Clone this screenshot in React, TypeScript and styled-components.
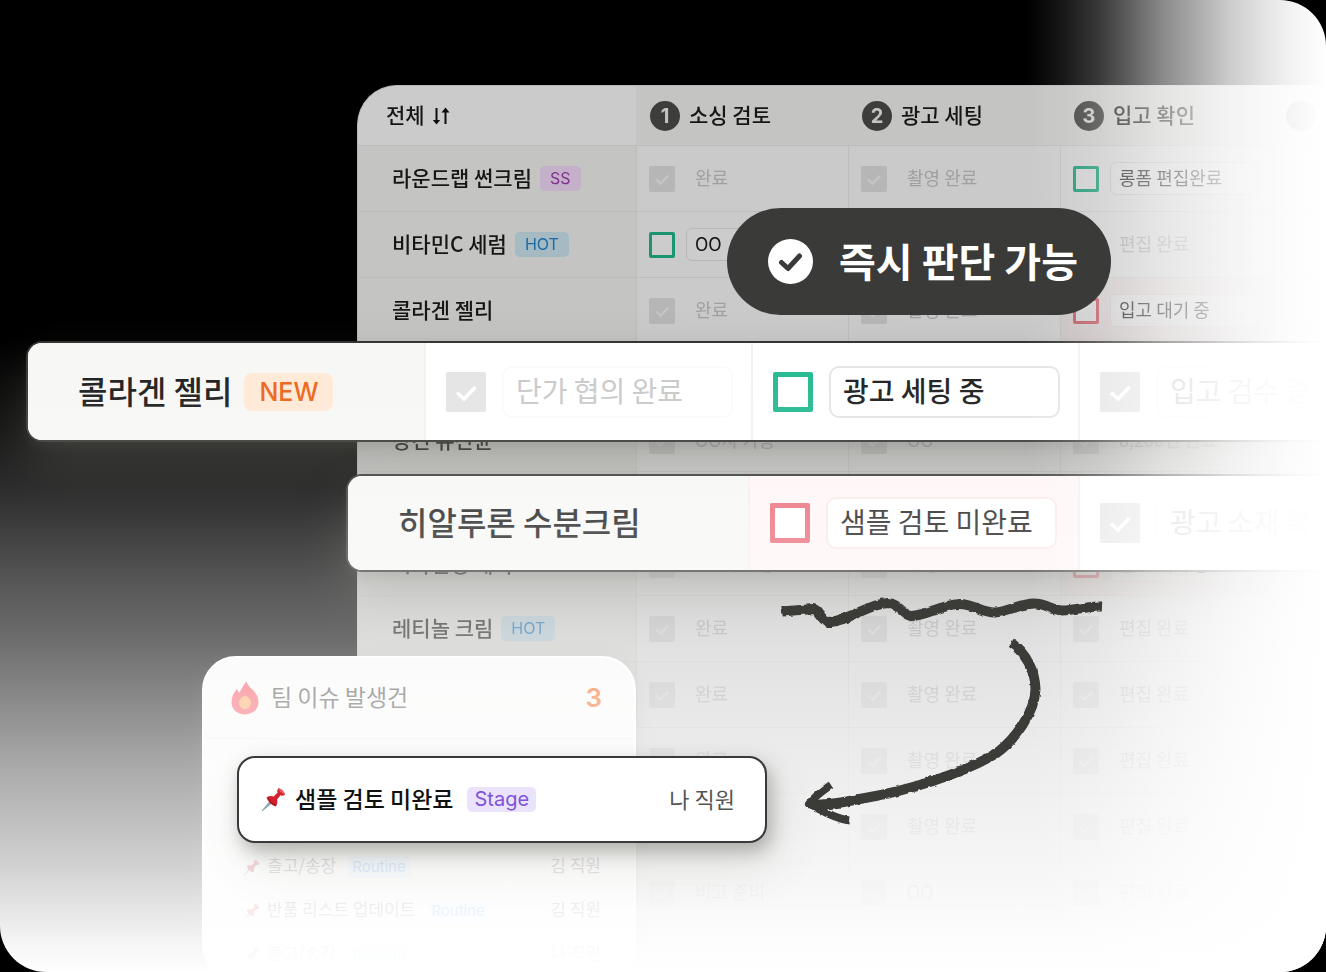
import React from 'react';
import styled, { createGlobalStyle } from 'styled-components';

const GlobalStyle = createGlobalStyle`
  *, *::before, *::after { box-sizing: border-box; }
  body {
    margin: 0;
    background: #000;
    font-family: 'Noto Sans CJK KR', 'Noto Sans', sans-serif;
    color: #1c1c1c;
  }
  button { font-family: inherit; }
`;

const Stage = styled.main`
  position: relative;
  display: flex;
  flex-direction: column;
  min-height: 100vh;
  padding: 85px 0 0 357px;
  overflow: hidden;
  background: #000;
  border-radius: 46px;
`;

/* ---------- board ---------- */

const Board = styled.section`
  flex: 1;
  overflow: hidden;
  border: 1px solid #e6e6e4;
  border-right: 0;
  border-bottom: 0;
  border-radius: 40px 0 0 0;
  background: #fdfdfd;
  filter: brightness(0.8);
`;

const Table = styled.table`
  width: 1126px;
  table-layout: fixed;
  border-collapse: separate;
  border-spacing: 0;
`;

const Row = styled.tr<{ $compact?: boolean }>`
  height: ${(p) => (p.$compact ? 62 : 66)}px;
`;

const HeadRow = styled.tr`
  height: 60px;
`;

const HeadCell = styled.th<{ $first?: boolean }>`
  padding: 0 0 0 ${(p) => (p.$first ? 28 : 14)}px;
  background: ${(p) => (p.$first ? '#fefefe' : '#f5f5f3')};
  border-bottom: 1px solid #ebebe9;
  text-align: left;
  font-size: 21px;
  line-height: 30px;
  font-weight: 500;
`;

const Inline = styled.span<{ $gap: number }>`
  display: flex;
  align-items: center;
  gap: ${(p) => p.$gap}px;
  white-space: nowrap;
`;

const Label = styled.span`
  padding-bottom: 4px;
`;

const Step = styled.span`
  display: grid;
  place-items: center;
  width: 30px;
  height: 30px;
  border-radius: 50%;
  background: #4c4c4a;
  color: #f4f4f4;
  font: 700 20px/30px Inter, sans-serif;
`;

const SortButton = styled.button`
  display: grid;
  padding: 0;
  border: 0;
  background: none;
  color: inherit;
`;

const NameCell = styled.th`
  padding: 0 0 0 34px;
  background: #f5f5f3;
  border-bottom: 1px solid #ebebe9;
  text-align: left;
  font-size: 21px;
  line-height: 30px;
  font-weight: 500;
`;

const StateCell = styled.td<{ $alert?: boolean }>`
  padding: 0 0 0 12px;
  background: ${(p) => (p.$alert ? '#fcf3f3' : '#fdfdfd')};
  border-left: 1px solid #ececea;
  border-bottom: 1px solid #ececea;
`;

const tones = {
  purple: ['#f5dcfa', '#a03fb4'],
  blue: ['#cfe8f5', '#2486cc'],
  orange: ['#ffe9d6', '#ec6215'],
  violet: ['#ebe3fc', '#7d53dc'],
  sky: ['#dceefd', '#3f8ff0'],
};
type Tone = keyof typeof tones;

const sizes = {
  xs: { pad: 4, radius: 5, font: 15, line: 22 },
  sm: { pad: 10, radius: 5, font: 16, line: 25 },
  md: { pad: 7, radius: 5, font: 20, line: 25 },
  lg: { pad: 15, radius: 8, font: 25, line: 38 },
};
type Size = keyof typeof sizes;

const Badge = styled.span<{ $tone: Tone; $size: Size }>`
  flex: none;
  padding: 0 ${(p) => sizes[p.$size].pad}px;
  border-radius: ${(p) => sizes[p.$size].radius}px;
  background: ${(p) => tones[p.$tone][0]};
  color: ${(p) => tones[p.$tone][1]};
  font-family: Inter, sans-serif;
  font-weight: ${(p) => (p.$size === 'lg' ? 500 : 400)};
  font-size: ${(p) => sizes[p.$size].font}px;
  line-height: ${(p) => sizes[p.$size].line}px;
`;

type Kind = 'done' | 'open' | 'alert';
const boxColor: Record<Kind, string> = { done: '#e4e4e4', open: '#22b98f', alert: '#ea6a78' };

const TickWrap = styled.span<{ $large?: boolean }>`
  display: grid;
  flex: none;
  width: ${(p) => (p.$large ? 40 : 26)}px;
  height: ${(p) => (p.$large ? 40 : 26)}px;
  > * { grid-area: 1 / 1; }
  svg { width: 100%; height: 100%; pointer-events: none; }
`;

const TickInput = styled.input<{ $kind: Kind; $large?: boolean }>`
  appearance: none;
  width: 100%;
  height: 100%;
  margin: 0;
  border: ${(p) => (p.$large ? 5 : 3)}px solid ${(p) => boxColor[p.$kind]};
  border-radius: 2px;
  background: ${(p) => (p.$kind === 'done' ? boxColor.done : '#fff')};
`;

function Tick({ kind, large, label }: { kind: Kind; large?: boolean; label: string }) {
  return (
    <TickWrap $large={large}>
      <TickInput type="checkbox" $kind={kind} $large={large} defaultChecked={kind === 'done'} aria-label={label} />
      {kind === 'done' && (
        <svg viewBox="0 0 40 40" fill="none" stroke={large ? '#fff' : '#f6f6f6'} strokeWidth="3.600" aria-hidden="true">
          <path d="M11 20.5 18 27 29.500 15" />
        </svg>
      )}
    </TickWrap>
  );
}

const StateButton = styled.button<{ $kind: Kind; $large?: boolean }>`
  flex: none;
  width: ${(p) => (p.$large ? 231 : 148)}px;
  height: ${(p) => (p.$large ? 52 : 33)}px;
  padding: 0 0 4px ${(p) => (p.$large ? 12 : 8)}px;
  border: ${(p) => (p.$large ? 2 : 1)}px solid
    ${(p) => (p.$kind === 'done' ? '#fbfbfb' : p.$kind === 'alert' ? '#fbe8ea' : '#e4e4e4')};
  border-radius: ${(p) => (p.$large ? 10 : 6)}px;
  background: ${(p) => (p.$kind === 'done' ? 'transparent' : '#fff')};
  color: ${(p) => (p.$kind === 'done' ? '#c8c8c8' : '#1c1c1c')};
  text-align: left;
  white-space: nowrap;
  font-size: ${(p) => (p.$large ? 28 : 18)}px;
  line-height: ${(p) => (p.$large ? 40 : 26)}px;
  font-weight: ${(p) => (p.$large && p.$kind === 'open' ? 500 : 400)};
`;

type State = [Kind, string];
function StateField({ state, large }: { state: State; large?: boolean }) {
  return (
    <Inline $gap={large ? 16 : 11}>
      <Tick kind={state[0]} large={large} label={state[1]} />
      <StateButton type="button" $kind={state[0]} $large={large}>{state[1]}</StateButton>
    </Inline>
  );
}

const usual: State[] = [['done', '완료'], ['done', '촬영 완료'], ['done', '편집 완료']];

const products: { name: string; badge?: [string, Tone]; compact?: boolean; states: State[] }[] = [
  { name: '라운드랩 썬크림', badge: ['SS', 'purple'], states: [usual[0], usual[1], ['open', '롱폼 편집완료']] },
  { name: '비타민C 세럼', badge: ['HOT', 'blue'], states: [['open', 'OO'], usual[1], usual[2]] },
  { name: '콜라겐 젤리', states: [usual[0], usual[1], ['alert', '입고 대기 중']] },
  { name: '', states: [] },
  { name: '장건 유산균', compact: true, states: [['done', 'OO사 가능'], ['done', 'OO'], ['done', '8,200건 완료']] },
  { name: '', compact: true, states: [] },
  { name: '시카진정 패치', compact: true, states: [['done', 'OO사 가능'], usual[1], ['alert', '입고 대기 중']] },
  { name: '레티놀 크림', badge: ['HOT', 'blue'], states: usual },
  { name: '', states: usual },
  { name: '', states: usual },
  { name: '', states: usual },
  { name: '', states: [['done', '비고 준비'], ['done', 'OO'], usual[2]] },
];

/* ---------- enlarged rows ---------- */

type Place = { $top: number; $left: number; $height: number };

const Strip = styled.section<Place>`
  position: absolute;
  top: ${(p) => p.$top}px;
  left: ${(p) => p.$left}px;
  right: 0;
  height: ${(p) => p.$height}px;
  display: flex;
  overflow: hidden;
  border: 2px solid #353533;
  border-right: 0;
  border-radius: 16px 0 0 16px;
  background: #fff;
`;

const StripShadow = styled.div<Place>`
  position: absolute;
  top: ${(p) => p.$top}px;
  left: ${(p) => p.$left}px;
  right: 0;
  height: ${(p) => p.$height}px;
  border-radius: 16px;
  box-shadow: 0 24px 48px rgba(90, 92, 78, 0.34), 0 6px 10px rgba(90, 92, 78, 0.16);
`;

const StripName = styled.h2<{ $width: number }>`
  display: flex;
  flex: none;
  align-items: center;
  gap: 12px;
  width: ${(p) => p.$width}px;
  margin: 0;
  padding-left: 50px;
  background: #f7f7f5;
  white-space: nowrap;
  font-size: 32px;
  line-height: 46px;
  font-weight: 500;
`;

const StripCell = styled.div<{ $alert?: boolean }>`
  display: flex;
  flex: none;
  align-items: center;
  width: ${(p) => (p.$alert ? 330 : 327)}px;
  padding-left: 20px;
  border-left: 2px solid ${(p) => (p.$alert ? '#f8eeee' : '#f1f1f0')};
  background: ${(p) => (p.$alert ? '#fff5f6' : '#fff')};
`;

/* ---------- issue card ---------- */

const Card = styled.section`
  position: absolute;
  top: 656px;
  left: 202px;
  width: 434px;
  border: 2px solid #fff;
  border-radius: 34px;
  background: #f8f8f7;
  box-shadow: 0 6px 20px rgba(90, 92, 78, 0.2);
`;

const CardHead = styled.header`
  display: flex;
  align-items: center;
  height: 81px;
  padding: 0 32px 0 27px;
  border-bottom: 1px solid #ececec;
`;

const CardTitle = styled.h2`
  flex: 1;
  margin: 0 0 0 12px;
  padding-bottom: 4px;
  color: #4a4a4a;
  font-size: 23px;
  line-height: 34px;
  font-weight: 400;
`;

const Count = styled.span`
  color: #ee5f0e;
  font: 600 26px/34px Inter, sans-serif;
`;

const IssueList = styled.ul`
  margin: 0;
  padding: 18px 33px 0 39px;
  list-style: none;
`;

const Issue = styled.li`
  display: flex;
  align-items: center;
  height: 44px;
  font-size: 17px;
  line-height: 26px;
  color: #5c5c5c;
  white-space: nowrap;
  svg { margin-right: 7px; }
  ${Badge} { margin-left: 12px; }
`;

const Owner = styled.span`
  margin-left: auto;
  padding-bottom: 4px;
`;

/* ---------- fades ---------- */

const Fade = styled.div`
  position: absolute;
  inset: 0;
  pointer-events: none;
  background: linear-gradient(
    to bottom,
    rgba(255, 255, 255, 0) 35%,
    rgba(255, 255, 255, 0.08) 43%,
    rgba(255, 255, 255, 0.17) 50%,
    rgba(255, 255, 255, 0.34) 60%,
    rgba(255, 255, 255, 0.43) 66%,
    rgba(255, 255, 255, 0.54) 72%,
    rgba(255, 255, 255, 0.65) 78%,
    rgba(255, 255, 255, 0.73) 83%,
    rgba(255, 255, 255, 0.82) 89%,
    rgba(255, 255, 255, 0.89) 93%,
    rgba(255, 255, 255, 0.96) 97%,
    #fff 100%
  );
`;

const SideFade = styled.div`
  position: absolute;
  top: 0;
  right: 0;
  bottom: 0;
  width: 300px;
  pointer-events: none;
  background: linear-gradient(
    to right,
    rgba(255, 255, 255, 0) 0%,
    rgba(255, 255, 255, 0.09) 12%,
    rgba(255, 255, 255, 0.22) 24%,
    rgba(255, 255, 255, 0.38) 35%,
    rgba(255, 255, 255, 0.55) 46%,
    rgba(255, 255, 255, 0.67) 57%,
    rgba(255, 255, 255, 0.8) 68%,
    rgba(255, 255, 255, 0.89) 79%,
    rgba(255, 255, 255, 0.95) 88%,
    #fff 100%
  );
`;

/* ---------- callouts ---------- */

const Pill = styled.p`
  position: absolute;
  top: 208px;
  left: 727px;
  display: flex;
  align-items: center;
  gap: 26px;
  height: 107px;
  margin: 0;
  padding: 0 33px 0 41px;
  border-radius: 54px;
  background: #3a3a38;
  color: #fff;
  white-space: nowrap;
  font-size: 40px;
  line-height: 58px;
  font-weight: 700;
`;

const Popup = styled.article`
  position: absolute;
  top: 756px;
  left: 237px;
  display: flex;
  align-items: center;
  width: 530px;
  height: 87px;
  padding: 0 30px 0 22px;
  border: 2px solid #3a3a3a;
  border-radius: 18px;
  background: #fff;
  box-shadow: 4px 8px 18px rgba(70, 70, 60, 0.36), 8px 24px 48px rgba(90, 92, 78, 0.12);
  white-space: nowrap;
  font-size: 22px;
  line-height: 32px;
  color: #555;
`;

const PopupTitle = styled.h3`
  margin: 0 14px 0 9px;
  padding-bottom: 4px;
  color: #111;
  font-size: 23px;
  line-height: 32px;
  font-weight: 500;
`;

const Strokes = styled.svg`
  position: absolute;
  top: 590px;
  left: 770px;
`;

const SortIcon = () => (
  <svg width="18" height="20" viewBox="0 0 18 20" fill="none" stroke="#111" strokeWidth="2" aria-hidden="true">
    <path d="M4.500 2v14M13.500 18V4" />
    <path d="M.8 14h7.400L4.500 18.500zM9.500 6.500h8L13.500 1.500z" fill="#111" stroke="none" />
  </svg>
);

const Flame = () => (
  <svg width="28" height="34" viewBox="0 0 28 34" aria-hidden="true">
    <path
      d="M15.500.5c1 4 4.500 6.500 7.300 9.600 2.900 3.300 4.700 6.800 4.700 11C27.500 28.600 21.500 33.500 14 33.500S.5 28.600.5 21.300c0-4.600 1.900-9.600 5.600-13.600.4 1.700 1.200 3 2.300 4C10 9 12.400 4 15.500.5Z"
      fill="#f4505e"
    />
    <path d="M14 14.500c3.800 1.500 6 4 6 7.500 0 3.300-2.700 6-6 6s-6-2.700-6-6c0-3.500 2.200-6 6-7.500Z" fill="#fba45c" />
  </svg>
);

const Pin = ({ size }: { size: number }) => (
  <svg width={size} height={size} viewBox="0 0 25 25" aria-hidden="true">
    <path d="M1 24 9.500 13.500l2 2Z" fill="#8fa6b4" stroke="#8fa6b4" />
    <path d="M5.500 10.500c2.500-1.600 5-1.800 7.200-.9l4-4c-.8-1.500-.5-3 .8-4.400 3 .7 5.500 3.100 6.500 6.200-1.300 1.300-2.900 1.700-4.400.9l-3.600 4.300c.8 2.300.5 4.500-1.200 7-4-1.200-7.800-4.800-9.300-9.100Z" fill="#d3222d" />
    <path d="M17.500 1.200c3 .7 5.500 3.100 6.500 6.200-2.800-.4-6-3.200-6.500-6.200Z" fill="#ee5a5e" />
    <path d="M7 11c2 3.800 4.600 6.200 8 7.500" stroke="#9d1420" strokeWidth="1.200" fill="none" />
  </svg>
);

const issues: [string, string][] = [
  ['출고/송장', '김 직원'],
  ['반품 리스트 업데이트', '김 직원'],
  ['출고/송장', '나 직원'],
];

const IssueSpacer = styled.li`
  height: 88px;
`;

export default function App() {
  return (
    <>
      <GlobalStyle />
      <Stage>
        <Board>
          <Table>
            <colgroup>
              <col width={278} />
              <col width={212} />
              <col width={212} />
              <col width={212} />
              <col width={212} />
            </colgroup>
            <thead>
              <HeadRow>
                <HeadCell $first scope="col">
                  <Inline $gap={7}>
                    <Label>전체</Label>
                    <SortButton type="button" aria-label="정렬"><SortIcon /></SortButton>
                  </Inline>
                </HeadCell>
                {['소싱 검토', '광고 세팅', '입고 확인', ''].map((title, i) => (
                  <HeadCell key={i} scope="col">
                    <Inline $gap={9}><Step>{title && i + 1}</Step><Label>{title}</Label></Inline>
                  </HeadCell>
                ))}
              </HeadRow>
            </thead>
            <tbody>
              {products.map((p, i) => (
                <Row key={i} $compact={p.compact}>
                  <NameCell scope="row">
                    <Inline $gap={8}>
                      <Label>{p.name}</Label>
                      {p.badge && <Badge $size="sm" $tone={p.badge[1]}>{p.badge[0]}</Badge>}
                    </Inline>
                  </NameCell>
                  {[0, 1, 2, 3].map((j) => {
                    const s = p.states[j];
                    return <StateCell key={j} $alert={s?.[0] === 'alert'}>{s && <StateField state={s} />}</StateCell>;
                  })}
                </Row>
              ))}
            </tbody>
          </Table>
        </Board>

        <StripShadow $top={341} $left={26} $height={101} />
        <StripShadow $top={474} $left={346} $height={98} />
        <Strip $top={341} $left={26} $height={101}>
          <StripName $width={396}>
            <Label>콜라겐 젤리</Label>
            <Badge $tone="orange" $size="lg">NEW</Badge>
          </StripName>
          <StripCell><StateField large state={['done', '단가 협의 완료']} /></StripCell>
          <StripCell><StateField large state={['open', '광고 세팅 중']} /></StripCell>
          <StripCell><StateField large state={['done', '입고 검수 중']} /></StripCell>
        </Strip>
        <Strip $top={474} $left={346} $height={98}>
          <StripName $width={400}><Label>히알루론 수분크림</Label></StripName>
          <StripCell $alert><StateField large state={['alert', '샘플 검토 미완료']} /></StripCell>
          <StripCell><StateField large state={['done', '광고 소재 확인']} /></StripCell>
        </Strip>

        <Card>
          <CardHead>
            <Flame />
            <CardTitle>팀 이슈 발생건</CardTitle>
            <Count>3</Count>
          </CardHead>
          <IssueList>
            <IssueSpacer aria-hidden="true" />
            {issues.map(([title, owner], i) => (
              <Issue key={i}>
                <Pin size={17} />
                <Label>{title}</Label>
                <Badge $size="xs" $tone="sky">Routine</Badge>
                <Owner>{owner}</Owner>
              </Issue>
            ))}
          </IssueList>
        </Card>

        <Fade />
        <SideFade />

        <Pill>
          <svg width="45" height="45" viewBox="0 0 45 45" aria-hidden="true">
            <circle cx="22.500" cy="22.500" r="22.500" fill="#fff" />
            <path d="M13.500 23.500 20 29.500 31.500 17" fill="none" stroke="#3a3a38" strokeWidth="5" strokeLinecap="round" strokeLinejoin="round" />
          </svg>
          <Label>즉시 판단 가능</Label>
        </Pill>

        <Popup>
          <Pin size={25} />
          <PopupTitle>샘플 검토 미완료</PopupTitle>
          <Badge $tone="violet" $size="md">Stage</Badge>
          <Owner>나 직원</Owner>
        </Popup>

        <Strokes width="350" height="250" viewBox="770 590 350 250" fill="none" stroke="#3a3a38" strokeWidth="10" strokeLinejoin="round" aria-hidden="true">
          <defs>
            <filter id="rough" x="-5%" y="-20%" width="110%" height="140%">
              <feTurbulence type="fractalNoise" baseFrequency="0.15" numOctaves="2" seed="4" />
              <feDisplacementMap in="SourceGraphic" scale="3" xChannelSelector="R" yChannelSelector="G" />
            </filter>
          </defs>
          <g filter="url(#rough)">
            <path d="M782 611.500C792 610 803 610 813 609 819 609 821 621 828 622 846 622 868 604 888 603 898 603 903 615 911 616 926 616 943 604 960 604 973 604 983 613 995 612.500 1008 612 1018 604 1034 603.500 1046 603 1052 611 1063 610.500 1075 610 1088 606 1102 606.500" />
            <path d="M1011 643C1025 652 1035 670 1035.500 689 1035 712 1015 740 996 753.500 960 775 905 791 865 798 845 802 825 806 810 804.500" />
            <path d="M831 785C822 791 814 797 809 804 820 809 832 818 849 820.500" strokeWidth="8" />
          </g>
        </Strokes>
      </Stage>
    </>
  );
}
